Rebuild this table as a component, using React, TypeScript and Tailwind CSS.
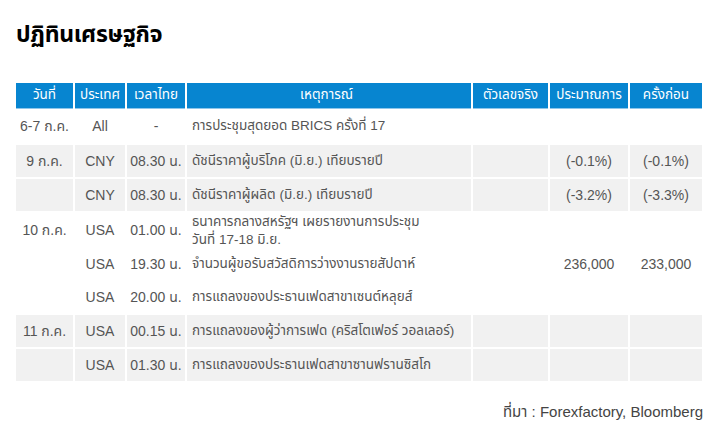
import React from "react";

type Row = {
  date?: string;
  country: string;
  time: string;
  event: React.ReactNode;
  actual?: string;
  forecast?: string;
  previous?: string;
  gray: boolean;
  h: string;
};

const rows: Row[] = [
  { date: "6-7 ก.ค.", country: "All", time: "-", event: "การประชุมสุดยอด BRICS ครั้งที่ 17", gray: false, h: "h-[34px]" },
  { date: "9 ก.ค.", country: "CNY", time: "08.30 น.", event: "ดัชนีราคาผู้บริโภค (มิ.ย.) เทียบรายปี", forecast: "(-0.1%)", previous: "(-0.1%)", gray: true, h: "h-[32px]" },
  { country: "CNY", time: "08.30 น.", event: "ดัชนีราคาผู้ผลิต (มิ.ย.) เทียบรายปี", forecast: "(-3.2%)", previous: "(-3.3%)", gray: true, h: "h-[32px]" },
  {
    date: "10 ก.ค.",
    country: "USA",
    time: "01.00 น.",
    event: (
      <div className="flex flex-col pt-[1px]">
        <span className="block h-[18px] leading-[18px]">ธนาคารกลางสหรัฐฯ เผยรายงานการประชุม</span>
        <span className="block h-[18px] leading-[18px]">วันที่ 17-18 มิ.ย.</span>
      </div>
    ),
    gray: false,
    h: "h-[34px]",
  },
  { country: "USA", time: "19.30 น.", event: "จำนวนผู้ขอรับสวัสดิการว่างงานรายสัปดาห์", forecast: "236,000", previous: "233,000", gray: false, h: "h-[30px]" },
  { country: "USA", time: "20.00 น.", event: "การแถลงของประธานเฟดสาขาเซนต์หลุยส์", gray: false, h: "h-[32px]" },
  { date: "11 ก.ค.", country: "USA", time: "00.15 น.", event: "การแถลงของผู้ว่าการเฟด  (คริสโตเฟอร์ วอลเลอร์)", gray: true, h: "h-[32px]" },
  { country: "USA", time: "01.30 น.", event: "การแถลงของประธานเฟดสาขาซานฟรานซิสโก", gray: true, h: "h-[32px]" },
];

const headers = ["วันที่", "ประเทศ", "เวลาไทย", "เหตุการณ์", "ตัวเลขจริง", "ประมาณการ", "ครั้งก่อน"];

export default function App() {
  const font = { fontFamily: '"Liberation Sans", "Noto Sans Thai", "Noto Sans", sans-serif' };
  return (
    <div className="w-[719px] h-[438px] bg-white relative overflow-hidden" style={font}>
      <div className="pl-4 pt-[19px] h-[83px]">
        <h1 className="text-[23px] leading-[30px] font-bold text-black tracking-[-0.3px]">ปฏิทินเศรษฐกิจ</h1>
      </div>
      <div className="ml-4 w-[686px] grid grid-cols-[57px_50px_58px_284px_75px_78px_72px] gap-x-[2px] gap-y-[2px] text-[14px] text-[#555]">
        {headers.map((h, i) => (
          <div
            key={h}
            className={`h-[26px] bg-[#0785d0] text-white text-[13.5px] flex items-center ${i === 3 ? "justify-end pr-[118px]" : "justify-center"} -mb-[2px] border-b border-[#8fc6ea]`}
          >
            {h}
          </div>
        ))}
        {rows.map((r, ri) => {
          const bg = r.gray ? "bg-[#f1f1f1]" : "bg-white";
          const cell = `${r.h} ${bg} flex items-center justify-center`;
          return (
            <React.Fragment key={ri}>
              <div className={cell}>{r.date ?? ""}</div>
              <div className={cell}>{r.country}</div>
              <div className={cell}>{r.time}</div>
              <div className={`${r.h} ${bg} flex items-center pl-[5px] whitespace-nowrap text-[13.5px]`}>{r.event}</div>
              <div className={cell}>{r.actual ?? ""}</div>
              <div className={cell}>{r.forecast ?? ""}</div>
              <div className={cell}>{r.previous ?? ""}</div>
            </React.Fragment>
          );
        })}
      </div>
      <div className="w-[703px] text-right pt-[19px] text-[15px] leading-[24px] text-[#444]">ที่มา : Forexfactory, Bloomberg</div>
    </div>
  );
}
